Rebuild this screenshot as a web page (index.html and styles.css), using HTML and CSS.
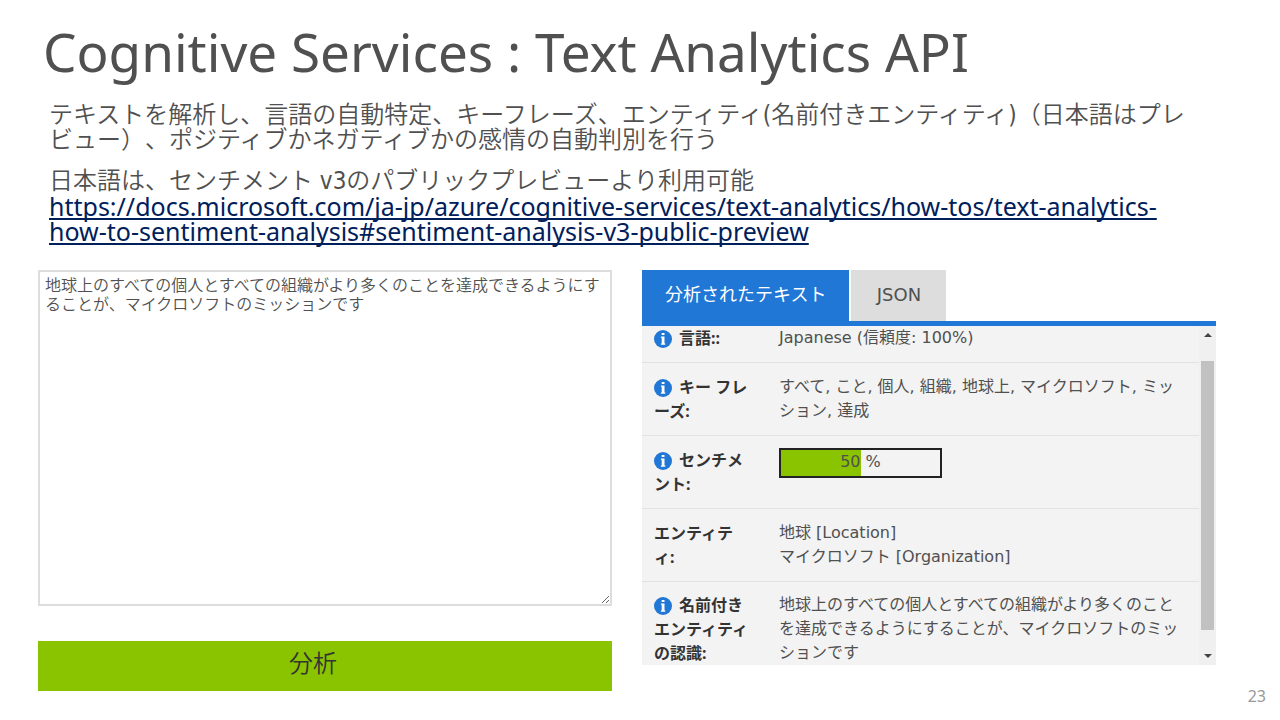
FILE: index.html
```html
<!DOCTYPE html>
<html lang="ja">
<head>
<meta charset="utf-8">
<meta name="viewport" content="width=device-width, initial-scale=1">
<title>Cognitive Services : Text Analytics API</title>
<link rel="stylesheet" href="styles.css">
</head>
<body>
<svg class="sprite" aria-hidden="true">
  <symbol id="info" viewBox="0 0 18 18">
    <circle cx="9" cy="9" r="9" fill="#2077d5"/>
    <path d="M7.7 3h2.8v2H7.7zM6.9 6.4h3.6v7h.8v1.4H6.9v-1.4h.8V7.8h-.8z" fill="#fff"/>
  </symbol>
</svg>
<main class="slide">
  <h1 class="title">Cognitive Services : Text Analytics API</h1>
  <section class="intro">
    <p class="para">テキストを解析し、言語の自動特定、キーフレーズ、エンティティ(名前付きエンティティ)（日本語はプレ<br>ビュー）、ポジティブかネガティブかの感情の自動判別を行う</p>
    <p class="para">日本語は、センチメント v3のパブリックプレビューより利用可能</p>
    <a class="doc-link" href="https://docs.microsoft.com/ja-jp/azure/cognitive-services/text-analytics/how-tos/text-analytics-how-to-sentiment-analysis#sentiment-analysis-v3-public-preview">https://docs.microsoft.com/ja-jp/azure/cognitive-services/text-analytics/how-tos/text-analytics-<br>how-to-sentiment-analysis#sentiment-analysis-v3-public-preview</a>
  </section>
  <div class="demo">
    <form class="input-side">
      <textarea class="source" aria-label="テキスト">地球上のすべての個人とすべての組織がより多くのことを達成できるようにすることが、マイクロソフトのミッションです</textarea>
      <button class="analyze" type="button">分析</button>
    </form>
    <section class="result">
      <div class="tabs" role="tablist">
        <button class="tab tab-active" type="button" role="tab" aria-selected="true">分析されたテキスト</button>
        <button class="tab" type="button" role="tab" aria-selected="false">JSON</button>
      </div>
      <div class="panel">
        <table class="facts">
          <tr>
            <th scope="row"><svg class="info"><use href="#info"/></svg>言語::</th>
            <td>Japanese (信頼度: 100%)</td>
          </tr>
          <tr>
            <th scope="row"><svg class="info"><use href="#info"/></svg>キー フレ<br>ーズ:</th>
            <td>すべて, こと, 個人, 組織, 地球上, マイクロソフト, ミッ<br>ション, 達成</td>
          </tr>
          <tr>
            <th scope="row"><svg class="info"><use href="#info"/></svg>センチメ<br>ント:</th>
            <td><div class="score"><div class="score-fill" style="width:50%"></div><span class="score-text">50 %</span></div></td>
          </tr>
          <tr>
            <th scope="row">エンティテ<br>ィ:</th>
            <td>地球 [Location]<br>マイクロソフト [Organization]</td>
          </tr>
          <tr>
            <th scope="row"><svg class="info"><use href="#info"/></svg>名前付き<br>エンティティ<br>の認識:</th>
            <td>地球上のすべての個人とすべての組織がより多くのこと<br>を達成できるようにすることが、マイクロソフトのミッ<br>ションです</td>
          </tr>
        </table>
        <div class="scrollbar" aria-hidden="true">
          <svg class="arrow" viewBox="0 0 8 4"><path d="M0 4L4 0L8 4z"/></svg>
          <div class="thumb"></div>
          <svg class="arrow" viewBox="0 0 8 4"><path d="M0 0L4 4L8 0z"/></svg>
        </div>
      </div>
    </section>
  </div>
  <footer class="page-number">23</footer>
</main>
</body>
</html>
```
FILE: styles.css
```css
* { box-sizing: border-box; }

body {
  margin: 0;
  background: #fff;
  color: #505050;
  font-family: "Noto Sans", "Noto Sans CJK JP", sans-serif;
  text-spacing-trim: space-all;
}

.sprite { display: none; }

.slide { padding: 16px 0 0; }

.title {
  margin: 0 43px;
  font-size: 53px;
  font-weight: 400;
  line-height: 72px;
}

.intro {
  margin: 15px 49px 0;
  font-size: 24px;
  line-height: 25px;
  white-space: nowrap;
}

.para {
  margin: 0 0 16px;
  font-family: "DejaVu Sans Condensed", "Noto Sans CJK JP", sans-serif;
  font-weight: 350;
}
.para + .para { margin-bottom: 0; }

.doc-link {
  display: block;
  color: #00205b;
  font-size: 25px;
  text-decoration-thickness: 2px;
  text-underline-offset: 2px;
  text-decoration-skip-ink: none;
}

.demo {
  display: grid;
  grid-template-columns: 1fr 1fr;
  gap: 30px;
  padding: 0 64px 0 38px;
  margin-top: 26px;
}

.input-side {
  display: flex;
  flex-direction: column;
  gap: 35px;
}

.source {
  display: block;
  width: 100%;
  height: 336px;
  padding: 4px 5px;
  border: 2px solid #ddd;
  color: #505050;
  font: 350 16px/19px "Noto Sans", "Noto Sans CJK JP", sans-serif;
  resize: both;
}

.analyze {
  height: 50px;
  padding: 0 24px 6px 0;
  border: 0;
  background: #8ac400;
  color: #333;
  font: 350 24px/36px "Noto Sans", "Noto Sans CJK JP", sans-serif;
}

.tabs {
  display: flex;
  gap: 2px;
  border-bottom: 5px solid #2077d5;
}

.tab {
  height: 51px;
  min-width: 95px;
  padding: 0 23px 2px;
  border: 0;
  background: #ddd;
  color: #505050;
  font: 400 18px/24px "DejaVu Sans", "Noto Sans CJK JP", sans-serif;
}
.tab-active { background: #2077d5; color: #fff; }

.panel {
  display: flex;
  background: #f3f3f3;
}

.facts {
  flex: 1;
  border-collapse: collapse;
  font-size: 16px;
  line-height: 24px;
}
.facts th, .facts td {
  padding: 12px 0;
  border-bottom: 1px solid #e2e2e2;
  text-align: left;
  vertical-align: top;
  white-space: nowrap;
}
.facts th { width: 137px; padding-left: 12px; color: #333; font-weight: 700; }
.facts td { font-family: "DejaVu Sans", "Noto Sans CJK JP", sans-serif; font-weight: 400; }
.facts tr:first-child > * { padding-top: 0; }
.facts tr:last-child > * { padding-top: 11px; padding-bottom: 0; border-bottom: 0; }

.info {
  width: 18px;
  height: 18px;
  margin-right: 7px;
  vertical-align: -4px;
}

.score {
  display: grid;
  width: 163px;
  height: 30px;
  border: 2px solid #222;
}
.score-fill, .score-text { grid-area: 1 / 1; }
.score-fill { background: #8ac400; }
.score-text { text-align: center; }

.scrollbar {
  display: flex;
  flex-direction: column;
  align-items: center;
  width: 17px;
  padding: 7px 0;
  background: #f0f0f0;
}
.arrow { width: 8px; height: 4px; fill: #444; }
.thumb {
  flex: 1;
  width: 13px;
  margin: 24px 0;
  background: #c1c1c1;
}

.page-number {
  padding: 0 14px;
  margin-top: -7px;
  color: #999;
  font-size: 16px;
  line-height: 24px;
  text-align: right;
}
```
